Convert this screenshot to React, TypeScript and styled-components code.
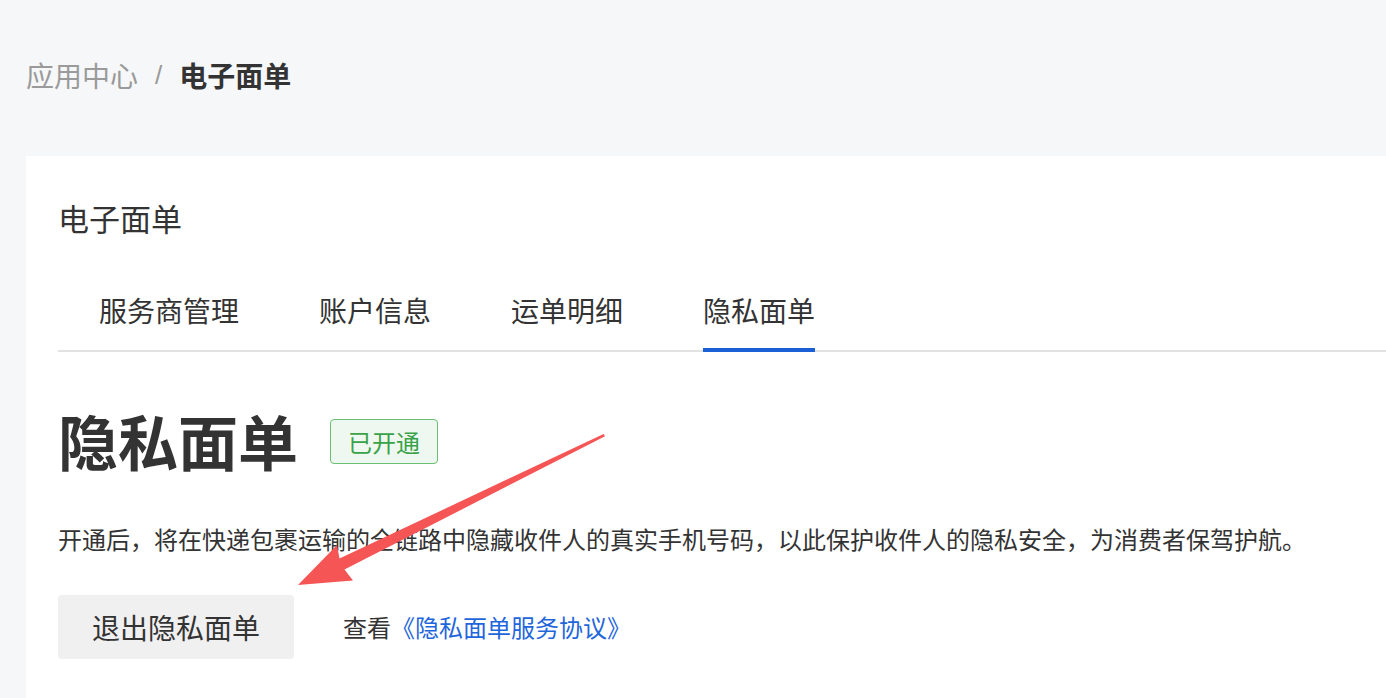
import React from "react";
import styled, { createGlobalStyle } from "styled-components";

const GlobalStyle = createGlobalStyle`
  html, body {
    margin: 0;
    padding: 0;
    background: #f6f7f9;
    font-family: "Noto Sans CJK SC", "Noto Sans", sans-serif;
    color: #333333;
  }
  #root {
    position: relative;
    min-height: 698px;
  }
`;

const Page = styled.div`
  padding-left: 26px;
  overflow: hidden;
  height: 698px;
  box-sizing: border-box;
`;

const Header = styled.div`
  height: 156px;
  box-sizing: border-box;
  padding-top: 57px;
  display: flex;
  align-items: flex-start;
  font-size: 28px;
  line-height: 36px;
`;

const Crumb = styled.span<{ $current?: boolean }>`
  color: ${(p) => (p.$current ? "#333333" : "#9a9a9a")};
  font-weight: ${(p) => (p.$current ? 700 : 400)};
`;

const Separator = styled.span`
  color: #9a9a9a;
  margin: 0 17px 0 17px;
  font-family: "Liberation Sans", sans-serif;
  font-size: 26px;
`;

const Card = styled.div`
  background: #ffffff;
  padding: 42px 0 80px 32px;
  min-height: 600px;
  box-sizing: border-box;
`;

const CardTitle = styled.div`
  font-size: 31px;
  line-height: 40px;
  color: #333333;
`;

const TabBar = styled.div`
  margin-top: 52px;
  display: flex;
  gap: 80px;
  padding-left: 41px;
  border-bottom: 2px solid #e2e2e2;
`;

const Tab = styled.div<{ $active?: boolean }>`
  position: relative;
  font-size: 28px;
  line-height: 40px;
  padding-bottom: 20px;
  color: #333333;
  cursor: pointer;
  &::after {
    content: "";
    display: ${(p) => (p.$active ? "block" : "none")};
    position: absolute;
    left: 0;
    right: 0;
    bottom: -2px;
    height: 4px;
    background: #1a5fd6;
  }
`;

const HeadingRow = styled.div`
  margin-top: 52px;
  display: flex;
  align-items: center;
  gap: 32px;
`;

const BigTitle = styled.h1`
  margin: 0;
  font-size: 60px;
  line-height: 72px;
  font-weight: 700;
  color: #333333;
`;

const Badge = styled.span`
  display: inline-flex;
  align-items: center;
  height: 45px;
  box-sizing: border-box;
  padding: 0 17px;
  margin-top: 3px;
  border: 1.5px solid #6abf72;
  border-radius: 4px;
  background: #eff8f0;
  color: #3aa34a;
  font-size: 24px;
  line-height: 1;
`;

const Description = styled.p`
  margin: 45px 0 0;
  font-size: 24px;
  line-height: 36px;
  color: #333333;
  white-space: nowrap;
`;

const ActionRow = styled.div`
  margin-top: 38px;
  display: flex;
  align-items: center;
  gap: 49px;
`;

const ExitButton = styled.button`
  height: 64px;
  width: 236px;
  border: none;
  border-radius: 4px;
  background: #f0f0f0;
  color: #333333;
  font-family: inherit;
  font-size: 28px;
  padding: 0;
  cursor: pointer;
`;

const AgreementText = styled.span`
  font-size: 24px;
  line-height: 36px;
  color: #333333;
`;

const AgreementLink = styled.a`
  color: #1f66dc;
  text-decoration: none;
`;

const ArrowOverlay = styled.svg`
  position: absolute;
  left: 0;
  top: 0;
  pointer-events: none;
`;

export default function App() {
  return (
    <>
      <GlobalStyle />
      <Page>
        <Header>
          <Crumb>应用中心</Crumb>
          <Separator>/</Separator>
          <Crumb $current>电子面单</Crumb>
        </Header>
        <Card>
          <CardTitle>电子面单</CardTitle>
          <TabBar>
            <Tab>服务商管理</Tab>
            <Tab>账户信息</Tab>
            <Tab>运单明细</Tab>
            <Tab $active>隐私面单</Tab>
          </TabBar>
          <HeadingRow>
            <BigTitle>隐私面单</BigTitle>
            <Badge>已开通</Badge>
          </HeadingRow>
          <Description>
            开通后，将在快递包裹运输的全链路中隐藏收件人的真实手机号码，以此保护收件人的隐私安全，为消费者保驾护航。
          </Description>
          <ActionRow>
            <ExitButton>退出隐私面单</ExitButton>
            <AgreementText>
              查看<AgreementLink href="#">《隐私面单服务协议》</AgreementLink>
            </AgreementText>
          </ActionRow>
        </Card>
      </Page>
      <ArrowOverlay width="1386" height="698" viewBox="0 0 1386 698">
        <polygon
          points="603.6,434 605,436.2 344.5,569.5 353,580.5 298,585 337,545 339.5,558.5"
          fill="#f55555"
        />
      </ArrowOverlay>
    </>
  );
}
